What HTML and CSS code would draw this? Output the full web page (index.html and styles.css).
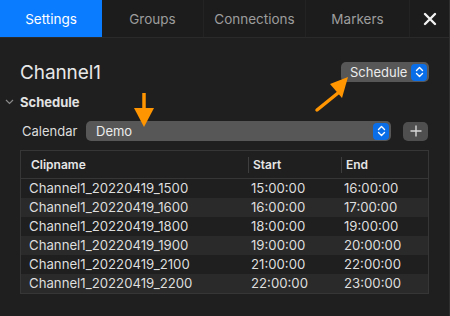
FILE: index.html
```html
<!DOCTYPE html>
<html lang="en">
<head>
    <meta charset="UTF-8">
    <title>Settings</title>
    <link rel="stylesheet" href="styles.css">
</head>
<body>
    <div class="window">
        <div class="tabs">
            <div class="tab active">Settings</div>
            <div class="tab">Groups</div>
            <div class="tab">Connections</div>
            <div class="tab">Markers</div>
            <div class="tab close">
                <svg width="14" height="14" viewBox="0 0 14 14">
                    <path d="M2 2 L12 12 M12 2 L2 12" stroke="#f2f2f2" stroke-width="2.4" stroke-linecap="round"/>
                </svg>
            </div>
        </div>

        <div class="content">
            <div class="title-row">
                <div class="title">Channel1</div>
                <div class="popup small">
                    <span>Schedule</span>
                    <span class="stepper">
                        <svg width="9" height="12" viewBox="0 0 9 12"><path d="M1.5 4.5 L4.5 1.5 L7.5 4.5 M1.5 7.5 L4.5 10.5 L7.5 7.5" fill="none" stroke="#fff" stroke-width="1.4" stroke-linecap="round" stroke-linejoin="round"/></svg>
                    </span>
                </div>
            </div>

            <div class="section">
                <svg class="chevron" width="9" height="6" viewBox="0 0 9 6"><path d="M1 1 L4.5 4.5 L8 1" fill="none" stroke="#8a8a8a" stroke-width="1.2"/></svg>
                <span>Schedule</span>
            </div>

            <div class="calendar-row">
                <span class="label">Calendar</span>
                <div class="popup wide">
                    <span>Demo</span>
                    <span class="stepper">
                        <svg width="9" height="12" viewBox="0 0 9 12"><path d="M1.5 4.5 L4.5 1.5 L7.5 4.5 M1.5 7.5 L4.5 10.5 L7.5 7.5" fill="none" stroke="#fff" stroke-width="1.4" stroke-linecap="round" stroke-linejoin="round"/></svg>
                    </span>
                </div>
                <div class="add-btn">
                    <svg width="12" height="12" viewBox="0 0 12 12"><path d="M6 0.5 V11.5 M0.5 6 H11.5" stroke="#d8d8d8" stroke-width="1.4"/></svg>
                </div>
            </div>

            <div class="table">
                <div class="thead">
                    <div class="th">Clipname</div>
                    <div class="th sep">Start</div>
                    <div class="th sep">End</div>
                </div>
                <div class="tr"><div>Channel1_20220419_1500</div><div>15:00:00</div><div>16:00:00</div></div>
                <div class="tr"><div>Channel1_20220419_1600</div><div>16:00:00</div><div>17:00:00</div></div>
                <div class="tr"><div>Channel1_20220419_1800</div><div>18:00:00</div><div>19:00:00</div></div>
                <div class="tr"><div>Channel1_20220419_1900</div><div>19:00:00</div><div>20:00:00</div></div>
                <div class="tr"><div>Channel1_20220419_2100</div><div>21:00:00</div><div>22:00:00</div></div>
                <div class="tr"><div>Channel1_20220419_2200</div><div>22:00:00</div><div>23:00:00</div></div>
            </div>
        </div>

        <!-- annotation arrows -->
        <svg class="arrow arrow-down" width="24" height="36" viewBox="0 0 24 36">
            <path d="M12 0 V18" stroke="#ff9500" stroke-width="3.5"/>
            <path d="M2 15 H22 L12 34 Z" fill="#ff9500"/>
        </svg>
        <svg class="arrow arrow-diag" width="48" height="40" viewBox="0 0 48 40">
            <path d="M3 37 L24 20" stroke="#ff9500" stroke-width="3.5" stroke-linecap="round"/>
            <path d="M34 4 L16 11 L28 25 Z" fill="#ff9500"/>
        </svg>
    </div>
</body>
</html>
```

FILE: styles.css
```css
html, body {
    margin: 0;
    padding: 0;
    background-color: #1e1e1e;
}

body {
    font-family: Inter, "Noto Sans", sans-serif;
    color: #e4e4e4;
    width: 450px;
    height: 316px;
    overflow: hidden;
}

.window {
    position: relative;
    width: 449px;
    height: 316px;
    border-right: 1px solid #2f2f2f;
    background-color: #1f1f1f;
}

.tabs {
    display: flex;
    height: 37px;
    border-bottom: 1px solid #2a2a2a;
    background-color: #1c1c1c;
}

.tab {
    width: 102px;
    display: flex;
    align-items: center;
    justify-content: center;
    font-size: 13.5px;
    color: #9d9d9d;
    border-right: 1px solid #232323;
    box-sizing: border-box;
}

.tab.active {
    background-color: #0a7cff;
    color: #ffffff;
    border-right: none;
}

.tab:nth-child(4) {
    width: 104px;
}

.tab.close {
    width: 39px;
    border-right: none;
}

.content {
    padding: 0 20px;
}

.title-row {
    display: flex;
    justify-content: space-between;
    align-items: center;
    height: 30px;
    padding-top: 19px;
}

.title {
    font-size: 19px;
    color: #e8e8e8;
    letter-spacing: -0.1px;
}

.popup {
    display: flex;
    align-items: center;
    justify-content: space-between;
    background-color: #575757;
    border-radius: 5px;
    height: 20px;
    padding-left: 9px;
    padding-right: 2px;
    box-sizing: border-box;
    font-size: 13px;
    color: #ececec;
}

.popup.small {
    width: 88px;
}

.stepper {
    display: flex;
    align-items: center;
    justify-content: center;
    width: 16px;
    height: 17px;
    background-color: #0a6ee8;
    border-radius: 4px;
}

.section {
    display: flex;
    align-items: center;
    margin-left: -15px;
    margin-top: 6px;
    height: 18px;
    font-size: 13px;
    font-weight: 700;
    color: #e2e2e2;
}

.chevron {
    margin-right: 6px;
}

.calendar-row {
    display: flex;
    align-items: center;
    margin-top: 10px;
    height: 20px;
}

.label {
    font-size: 13px;
    color: #dcdcdc;
    margin-left: 2px;
    width: 64px;
}

.popup.wide {
    width: 305px;
    padding-left: 10px;
}

.add-btn {
    display: flex;
    align-items: center;
    justify-content: center;
    width: 25px;
    height: 19px;
    margin-left: 12px;
    background-color: #4f4f4f;
    border-radius: 5px;
}

.table {
    margin-top: 9px;
    border: 1px solid #363636;
    width: 409px;
    box-sizing: border-box;
}

.thead, .tr {
    display: grid;
    grid-template-columns: 227px 93px 1fr;
}

.thead {
    height: 27px;
    border-bottom: 1px solid #363636;
    align-items: center;
}

.th {
    font-size: 12px;
    font-weight: 600;
    color: #e6e6e6;
    padding-left: 10px;
    height: 16px;
    line-height: 16px;
}

.th.sep {
    border-left: 1px solid #3e3e3e;
    padding-left: 4px;
}

.tr {
    height: 19px;
    line-height: 19px;
    font-size: 13.2px;
    color: #dedede;
}

.tr > div {
    padding-left: 3px;
}

.tr > div:first-child {
    padding-left: 8px;
}

.tr:nth-child(odd) {
    background-color: #2a2a2a;
}

.arrow {
    position: absolute;
}

.arrow-down {
    left: 132px;
    top: 93px;
}

.arrow-diag {
    left: 314px;
    top: 73px;
}
```
